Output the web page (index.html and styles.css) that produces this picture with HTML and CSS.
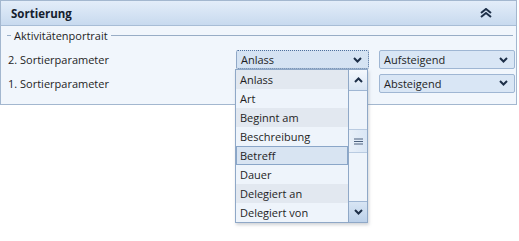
FILE: index.html
```html
<!DOCTYPE html>
<html lang="de">
  <head>
    <meta charset="UTF-8" />
    <title>Sortierung</title>
    <link rel="stylesheet" href="styles.css">
  </head>
  <body>
    <div class="panel">
      <div class="header">
        <span class="header-title">Sortierung</span>
        <svg class="collapse" width="12" height="10" viewBox="0 0 12 10">
          <path d="M1 5 L6 1 L11 5 M1 9 L6 5 L11 9" fill="none" stroke="#1d2f48" stroke-width="2"/>
        </svg>
      </div>
      <div class="body">
        <div class="group-title">
          <span class="line short"></span>
          <span class="group-text">Aktivitätenportrait</span>
          <span class="line"></span>
        </div>
        <div class="rows">
          <div class="label">2. Sortierparameter</div>
          <div class="select field focus">
            <span>Anlass</span>
            <svg width="9" height="6" viewBox="0 0 9 6"><path d="M1 1 L4.5 4.5 L8 1" fill="none" stroke="#1d2f48" stroke-width="2"/></svg>
          </div>
          <div class="select order">
            <span>Aufsteigend</span>
            <svg width="9" height="6" viewBox="0 0 9 6"><path d="M1 1 L4.5 4.5 L8 1" fill="none" stroke="#1d2f48" stroke-width="2"/></svg>
          </div>
          <div class="label">1. Sortierparameter</div>
          <div></div>
          <div class="select order">
            <span>Absteigend</span>
            <svg width="9" height="6" viewBox="0 0 9 6"><path d="M1 1 L4.5 4.5 L8 1" fill="none" stroke="#1d2f48" stroke-width="2"/></svg>
          </div>
        </div>
      </div>
    </div>

    <div class="dropdown">
      <ul class="items">
        <li class="alt">Anlass</li>
        <li>Art</li>
        <li class="alt">Beginnt am</li>
        <li>Beschreibung</li>
        <li class="selected">Betreff</li>
        <li>Dauer</li>
        <li class="alt">Delegiert an</li>
        <li>Delegiert von</li>
      </ul>
      <div class="scrollbar">
        <div class="sb-btn">
          <svg width="9" height="6" viewBox="0 0 9 6"><path d="M1 5 L4.5 1.5 L8 5" fill="none" stroke="#1d2f48" stroke-width="2"/></svg>
        </div>
        <div class="track">
          <div class="thumb">
            <svg width="9" height="7" viewBox="0 0 9 7"><path d="M0 1h9M0 3.5h9M0 6h9" stroke="#4a5f7c" stroke-width="1"/></svg>
          </div>
        </div>
        <div class="sb-btn down">
          <svg width="9" height="6" viewBox="0 0 9 6"><path d="M1 1 L4.5 4.5 L8 1" fill="none" stroke="#1d2f48" stroke-width="2"/></svg>
        </div>
      </div>
    </div>
  </body>
</html>
```

FILE: styles.css
```css
body {
  margin: 0;
  background: #ffffff;
  font-family: "Open Sans", "Noto Sans", sans-serif;
  font-size: 11px;
  color: #1e1e1e;
}

.panel {
  width: 515px;
  height: 103px;
  border: 1px solid #a3b7cf;
  background: #f1f6fc;
}

.header {
  height: 24px;
  display: flex;
  align-items: center;
  justify-content: space-between;
  padding: 0 24px 0 10px;
  background: linear-gradient(#e3edf9, #c8daef);
  border-bottom: 1px solid #a8bdd6;
}
.header-title {
  font-weight: bold;
  font-size: 11.5px;
  color: #15202e;
}

.body {
  padding: 2px 3px 0 6px;
}

.group-title {
  display: flex;
  align-items: center;
  gap: 3px;
  height: 14px;
}
.group-title .line {
  flex: 1;
  height: 1px;
  background: #98adc6;
}
.group-title .line.short {
  flex: none;
  width: 4px;
}
.group-text {
  color: #1e1e1e;
}

.rows {
  display: grid;
  grid-template-columns: 219px 133px 136px;
  grid-template-rows: 19px 20px;
  column-gap: 10px;
  row-gap: 4px;
  align-items: center;
  margin-top: 8px;
}
.label {
  padding-left: 1px;
}

.select {
  height: 17px;
  border: 1px solid #9fb6d3;
  border-radius: 2px;
  background: #d9e6f5;
  display: flex;
  align-items: center;
  justify-content: space-between;
  padding: 0 6px 0 4px;
}
.select.focus {
  border: 1px dotted #4d6f9c;
  background: #d5e3f3;
}

.dropdown {
  position: absolute;
  left: 235px;
  top: 69px;
  width: 131px;
  height: 152px;
  border: 1px solid #8fa8c7;
  background: #eef4fb;
  display: flex;
  box-shadow: 1px 2px 3px rgba(120, 130, 140, 0.35);
}
.items {
  list-style: none;
  margin: 0;
  padding: 0;
  flex: 1;
}
.items li {
  height: 19px;
  line-height: 19px;
  padding-left: 4px;
  box-sizing: border-box;
}
.items li.alt {
  background: #e2e8f0;
}
.items li.selected {
  background: #d8e4f2;
  border: 1px solid #8aa6c8;
  line-height: 17px;
  padding-left: 3px;
}

.scrollbar {
  width: 18px;
  border-left: 1px solid #8fa8c7;
  display: flex;
  flex-direction: column;
  background: #eef4fb;
}
.sb-btn {
  height: 20px;
  display: flex;
  align-items: center;
  justify-content: center;
  background: linear-gradient(#f4f8fd, #d8e5f4);
  border-bottom: 1px solid #9fb6d3;
}
.sb-btn.down {
  border-bottom: none;
  border-top: 1px solid #9fb6d3;
  background: linear-gradient(#d8e5f4, #bcd1ea);
}
.track {
  flex: 1;
  display: flex;
  flex-direction: column;
}
.thumb {
  margin-top: 38px;
  height: 22px;
  display: flex;
  align-items: center;
  justify-content: center;
  background: linear-gradient(90deg, #e9f0f9, #d9e6f5);
  border-top: 1px solid #b9cbe1;
  border-bottom: 1px solid #b9cbe1;
}
```
